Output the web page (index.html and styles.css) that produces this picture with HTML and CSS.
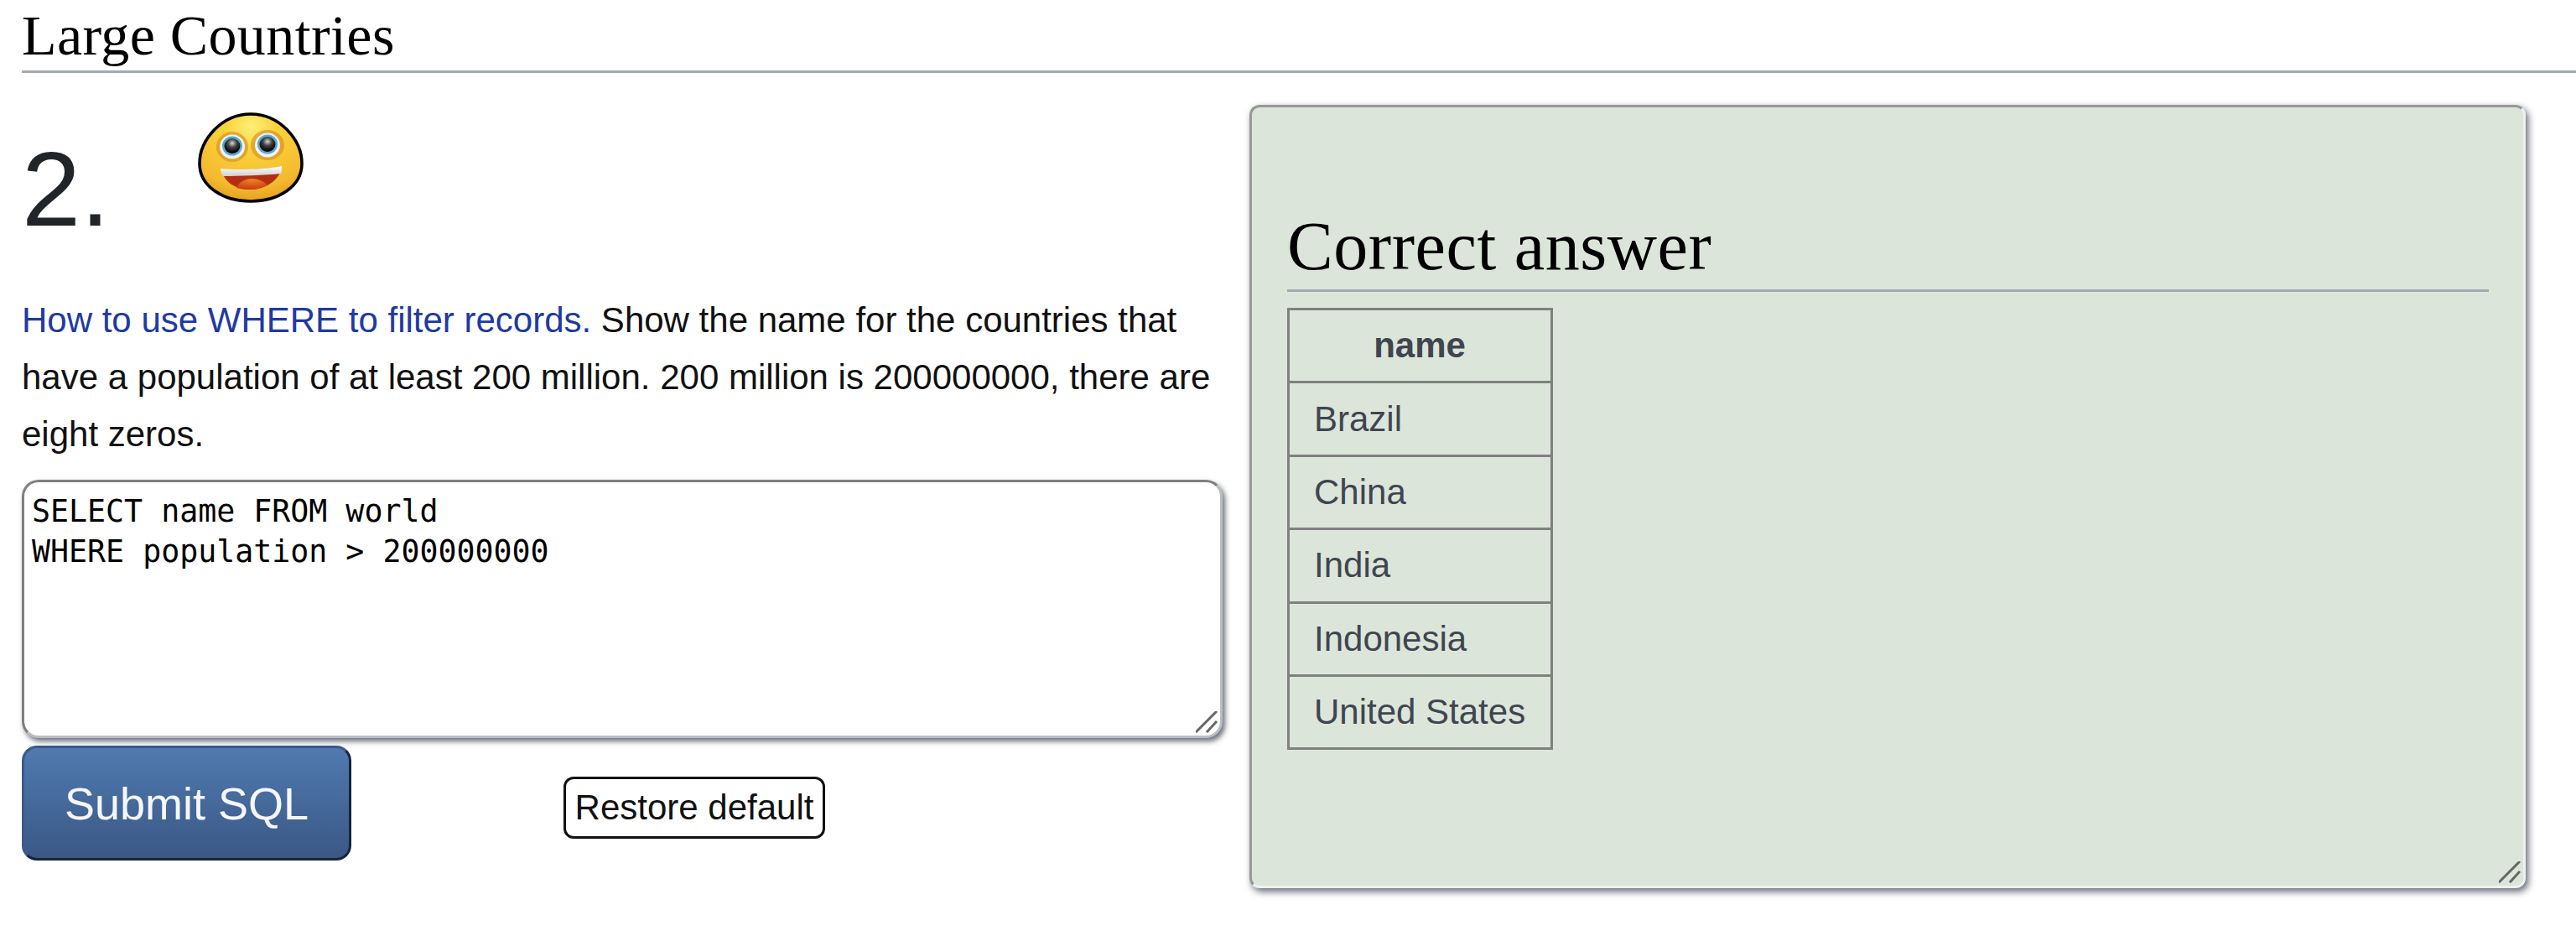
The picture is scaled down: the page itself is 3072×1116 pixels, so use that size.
FILE: index.html
```html
<!DOCTYPE html>
<html lang="en">
<head>
<meta charset="utf-8">
<title>Large Countries</title>
<link rel="stylesheet" href="styles.css">
</head>
<body>
<h2 class="page-title">Large Countries</h2>
<div class="columns">
  <section class="question">
    <div class="qhead">
      <span class="qnum">2.</span>
      <svg class="smiley" viewBox="0 0 126 108" aria-hidden="true">
        <defs>
          <radialGradient id="face" cx="50%" cy="15%" r="85%">
            <stop offset="0" stop-color="#fdf07a"/>
            <stop offset=".3" stop-color="#fbd23a"/>
            <stop offset=".8" stop-color="#f4ba30"/>
            <stop offset="1" stop-color="#e8a01e"/>
          </radialGradient>
          <linearGradient id="teeth" x1="0" y1="0" x2="0" y2="1">
            <stop offset="0" stop-color="#fff"/>
            <stop offset="1" stop-color="#d0d0d0"/>
          </linearGradient>
          <radialGradient id="tongue" cx="50%" cy="10%" r="85%">
            <stop offset="0" stop-color="#ee8326"/>
            <stop offset="1" stop-color="#c9400f"/>
          </radialGradient>
          <radialGradient id="pupil" cx="50%" cy="32%" r="62%">
            <stop offset="0" stop-color="#d8d8d8"/>
            <stop offset=".45" stop-color="#444"/>
            <stop offset="1" stop-color="#000"/>
          </radialGradient>
        </defs>
        <path d="M63 2C28 2 2 33 2 61c0 28 29 45 61 45s61-17 61-45C124 33 98 2 63 2Z" fill="url(#face)" stroke="#000" stroke-width="3.6"/>
        <ellipse cx="41" cy="41" rx="19" ry="18" fill="#d98d1e" opacity=".65"/>
        <ellipse cx="83" cy="39" rx="20" ry="18" fill="#d98d1e" opacity=".65"/>
        <ellipse cx="41" cy="41" rx="15" ry="14.5" fill="#eef4f6"/>
        <ellipse cx="83" cy="39" rx="15" ry="14.5" fill="#eef4f6"/>
        <ellipse cx="41" cy="40" rx="12" ry="11.5" fill="#58a9cf"/>
        <ellipse cx="83" cy="38" rx="12" ry="11.5" fill="#58a9cf"/>
        <ellipse cx="41" cy="40" rx="9.5" ry="9" fill="url(#pupil)"/>
        <ellipse cx="83" cy="38" rx="9.5" ry="9" fill="url(#pupil)"/>
        <path d="M28 68C47 69 80 68 100 65 98 81 80 92 62 92 45 92 31 83 28 68Z" fill="#b32f12"/>
        <path d="M46 90C49 83 56 79 64 79 72 79 79 82 83 87 76 90 70 92 62 92 56 92 50 91 46 90Z" fill="url(#tongue)"/>
        <path d="M27 67C47 69 80 68 100 64 100 67 100 71 99 73 80 75 50 76 30 76 28 73 27 70 27 67Z" fill="url(#teeth)"/>
      </svg>
    </div>
    <p class="prompt"><a class="prompt-link" href="#">How to use WHERE to filter records.</a> Show the name for the countries that have a population of at least 200 million. 200 million is 200000000, there are eight zeros.</p>
    <div class="editor"><span class="sql">SELECT name FROM world
WHERE population &gt; 200000000</span>
      <svg class="grip" viewBox="0 0 26 26" aria-hidden="true"><path d="M1 24 24 1M14 24 24 13" stroke="#666" stroke-width="3" stroke-linecap="square"/></svg>
    </div>
    <div class="actions">
      <button class="submit" type="button">Submit SQL</button>
      <button class="restore" type="button">Restore default</button>
    </div>
  </section>
  <section class="answer">
    <h2 class="answer-title">Correct answer</h2>
    <table class="results">
      <tr><th>name</th></tr>
      <tr><td>Brazil</td></tr>
      <tr><td>China</td></tr>
      <tr><td>India</td></tr>
      <tr><td>Indonesia</td></tr>
      <tr><td>United States</td></tr>
    </table>
    <svg class="grip" viewBox="0 0 26 26" aria-hidden="true"><path d="M1 24 24 1M14 24 24 13" stroke="#666" stroke-width="3" stroke-linecap="square"/></svg>
  </section>
</div>
</body>
</html>
```
FILE: styles.css
```css
* { box-sizing: border-box; }
html, body { margin: 0; background: #fff; }
body {
  height: 1116px;
  overflow: hidden;
  padding-left: 26px;
  font-family: "Liberation Sans", Arial, sans-serif;
  color: #212529;
}
.page-title {
  margin: 0;
  height: 87px;
  padding-top: 8px;
  font: 400 68px/68px "Liberation Serif", serif;
  letter-spacing: .4px;
  color: #000;
  border-bottom: 3px solid #a2a9b1;
}
.columns {
  display: flex;
  align-items: flex-start;
  padding-top: 38px;
}
.question { width: 1432px; flex: none; margin-top: 2px; }
.qhead {
  display: flex;
  height: 221px;
  align-items: flex-start;
}
.qnum {
  font-size: 126px;
  line-height: 120px;
  margin-top: 39px;
}
.smiley { width: 126px; height: 108px; margin: 7px 0 0 105px; }
.prompt {
  margin: 0;
  font-size: 42px;
  line-height: 68px;
  color: #111;
}
.prompt-link { color: #2139a3; text-decoration: none; }
.editor {
  position: relative;
  height: 308px;
  margin-top: 20px;
  padding: 11px 9px;
  font: 36.6px/48px "DejaVu Sans Mono", monospace;
  color: #000;
  background: #fff;
  border: 3px solid;
  border-color: #808080 #b9bdc6 #b9bdc6 #808080;
  border-radius: 20px;
  box-shadow: 3px 4px 6px rgba(60, 65, 80, .75);
}
.sql { white-space: pre-wrap; }
.grip { position: absolute; right: 3px; bottom: 3px; width: 26px; height: 26px; }
.actions {
  display: flex;
  align-items: flex-start;
  margin-top: 9px;
}
.submit {
  width: 393px;
  height: 137px;
  padding: 0;
  font: 400 54px "Liberation Sans", Arial, sans-serif;
  color: #f4f6fa;
  background: linear-gradient(#507ab0, #3a5885);
  border: 3px solid;
  border-color: #3a5a88 #16243a #16243a #3a5a88;
  border-radius: 18px;
}
.restore {
  width: 312px;
  height: 74px;
  margin: 37px 0 0 253px;
  padding: 0;
  font: 400 42px "Liberation Sans", Arial, sans-serif;
  color: #111;
  background: #fff;
  border: 3px solid #111;
  border-radius: 12px;
}
.answer {
  position: relative;
  width: 1522px;
  height: 934px;
  flex: none;
  margin-left: 32px;
  padding: 120px 41px 0 42px;
  background: #dce5da;
  border: 3px solid;
  border-color: #999 #eef1ee #eef1ee #999;
  border-radius: 12px;
  box-shadow: 3px 4px 8px rgba(60, 65, 80, .8);
}
.answer-title {
  margin: 0;
  height: 100px;
  font: 400 82px/92px "Liberation Serif", serif;
  letter-spacing: .55px;
  color: #000;
  border-bottom: 3px solid #a2a9b1;
}
.results {
  margin-top: 19px;
  border-collapse: collapse;
  font-size: 42px;
  color: #40454f;
}
.results th, .results td {
  height: 87.4px;
  padding: 0 30px 0 29px;
  border: 3px solid #808080;
}
.results td { text-align: left; }
```
